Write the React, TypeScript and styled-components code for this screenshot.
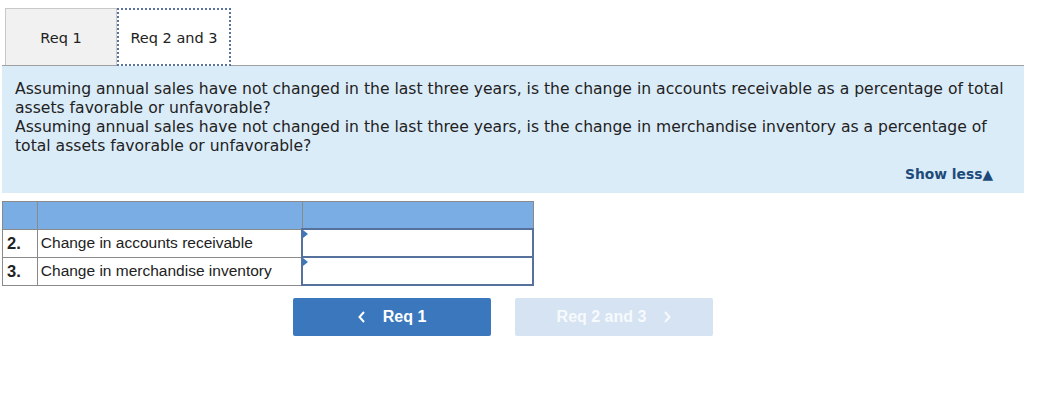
import React from "react";
import styled, { createGlobalStyle } from "styled-components";

const Global = createGlobalStyle`
  html, body { margin: 0; padding: 0; background: #fff; }
  body { font-family: "DejaVu Sans", Verdana, sans-serif; color: #222; }
`;

const Root = styled.div`
  width: 1022px;
  padding: 8px 0 0 2px;
`;

const TabBar = styled.div`
  display: flex;
  align-items: flex-end;
  padding-left: 3px;
  border-bottom: 1px solid #a0a0a0;
  height: 57px;
`;

const Tab = styled.div<{ $active?: boolean }>`
  box-sizing: border-box;
  height: ${(p) => (p.$active ? "58px" : "57px")};
  width: ${(p) => (p.$active ? "114px" : "112px")};
  margin-bottom: ${(p) => (p.$active ? "-1px" : "0")};
  display: flex;
  align-items: center;
  justify-content: center;
  padding-top: 2px;
  font-size: 14.5px;
  color: #222;
  background: ${(p) => (p.$active ? "#fff" : "#f1f1f1")};
  border: ${(p) => (p.$active ? "2px dotted #5b72a0" : "1px solid #c8c8c8")};
  border-bottom: ${(p) => (p.$active ? "2px dotted #5b72a0" : "none")};
  position: relative;
  z-index: ${(p) => (p.$active ? 1 : 0)};
`;

const Panel = styled.div`
  box-sizing: border-box;
  background: #dbecf9;
  padding: 14px 13px 11px 13px;
  height: 127px;
  display: flex;
  flex-direction: column;
`;

const Question = styled.p`
  margin: 0;
  font-size: 15.6px;
  line-height: 19px;
  color: #222;
`;

const ShowLess = styled.div`
  margin-top: auto;
  align-self: flex-end;
  margin-right: 18px;
  font-size: 13.8px;
  font-weight: bold;
  color: #1e4a7a;
`;

const Table = styled.table`
  margin-top: 8px;
  border-collapse: collapse;
  font-family: "Liberation Sans", Arial, sans-serif;
  font-size: 15.5px;
  color: #222;
  width: 532px;
`;

const HeadCell = styled.th<{ $w: number }>`
  width: ${(p) => p.$w}px;
  height: 26px;
  background: #79ade3;
  border: 1px solid #8a8a8a;
  padding: 0;
`;

const NumCell = styled.td`
  height: 27px;
  border: 1px solid #8a8a8a;
  font-weight: bold;
  font-size: 16.5px;
  padding: 0 0 0 4px;
`;

const LabelCell = styled.td`
  border: 1px solid #8a8a8a;
  padding: 0 0 0 3px;
`;

const InputCell = styled.td`
  border: 2px solid #56719b;
  padding: 0;
  position: relative;
  background: #fff;
`;

const Marker = styled.span`
  position: absolute;
  left: 0;
  top: 0;
  width: 0;
  height: 0;
  border-top: 4px solid transparent;
  border-bottom: 4px solid transparent;
  border-left: 5px solid #3a78bd;
`;

const ButtonRow = styled.div`
  display: flex;
  gap: 24px;
  padding-left: 291px;
  margin-top: 12px;
`;

const NavButton = styled.div<{ $disabled?: boolean }>`
  width: 198px;
  height: 38px;
  border-radius: 2px;
  background: ${(p) => (p.$disabled ? "#d6e3f2" : "#3a77bc")};
  color: ${(p) => (p.$disabled ? "#f7fafd" : "#fff")};
  font-family: "Liberation Sans", Arial, sans-serif;
  font-size: 16px;
  font-weight: bold;
  display: flex;
  align-items: center;
  justify-content: center;
  gap: 17px;
`;

const Chevron = ({ dir }: { dir: "left" | "right" }) => (
  <svg width="8" height="12" viewBox="0 0 8 12">
    <path
      d={dir === "left" ? "M6 1 L1.5 6 L6 11" : "M2 1 L6.5 6 L2 11"}
      fill="none"
      stroke="currentColor"
      strokeWidth="2"
    />
  </svg>
);

export default function App() {
  return (
    <Root>
      <Global />
      <TabBar>
        <Tab>Req 1</Tab>
        <Tab $active>Req 2 and 3</Tab>
      </TabBar>
      <Panel>
        <Question>
          Assuming annual sales have not changed in the last three years, is the change in accounts
          receivable as a percentage of total assets favorable or unfavorable?
        </Question>
        <Question>
          Assuming annual sales have not changed in the last three years, is the change in merchandise
          inventory as a percentage of total assets favorable or unfavorable?
        </Question>
        <ShowLess>Show less▲</ShowLess>
      </Panel>
      <Table>
        <thead>
          <tr>
            <HeadCell $w={34} />
            <HeadCell $w={266} />
            <HeadCell $w={232} />
          </tr>
        </thead>
        <tbody>
          <tr>
            <NumCell>2.</NumCell>
            <LabelCell>Change in accounts receivable</LabelCell>
            <InputCell>
              <Marker />
            </InputCell>
          </tr>
          <tr>
            <NumCell>3.</NumCell>
            <LabelCell>Change in merchandise inventory</LabelCell>
            <InputCell>
              <Marker />
            </InputCell>
          </tr>
        </tbody>
      </Table>
      <ButtonRow>
        <NavButton>
          <Chevron dir="left" />
          Req 1
        </NavButton>
        <NavButton $disabled>
          Req 2 and 3
          <Chevron dir="right" />
        </NavButton>
      </ButtonRow>
    </Root>
  );
}
